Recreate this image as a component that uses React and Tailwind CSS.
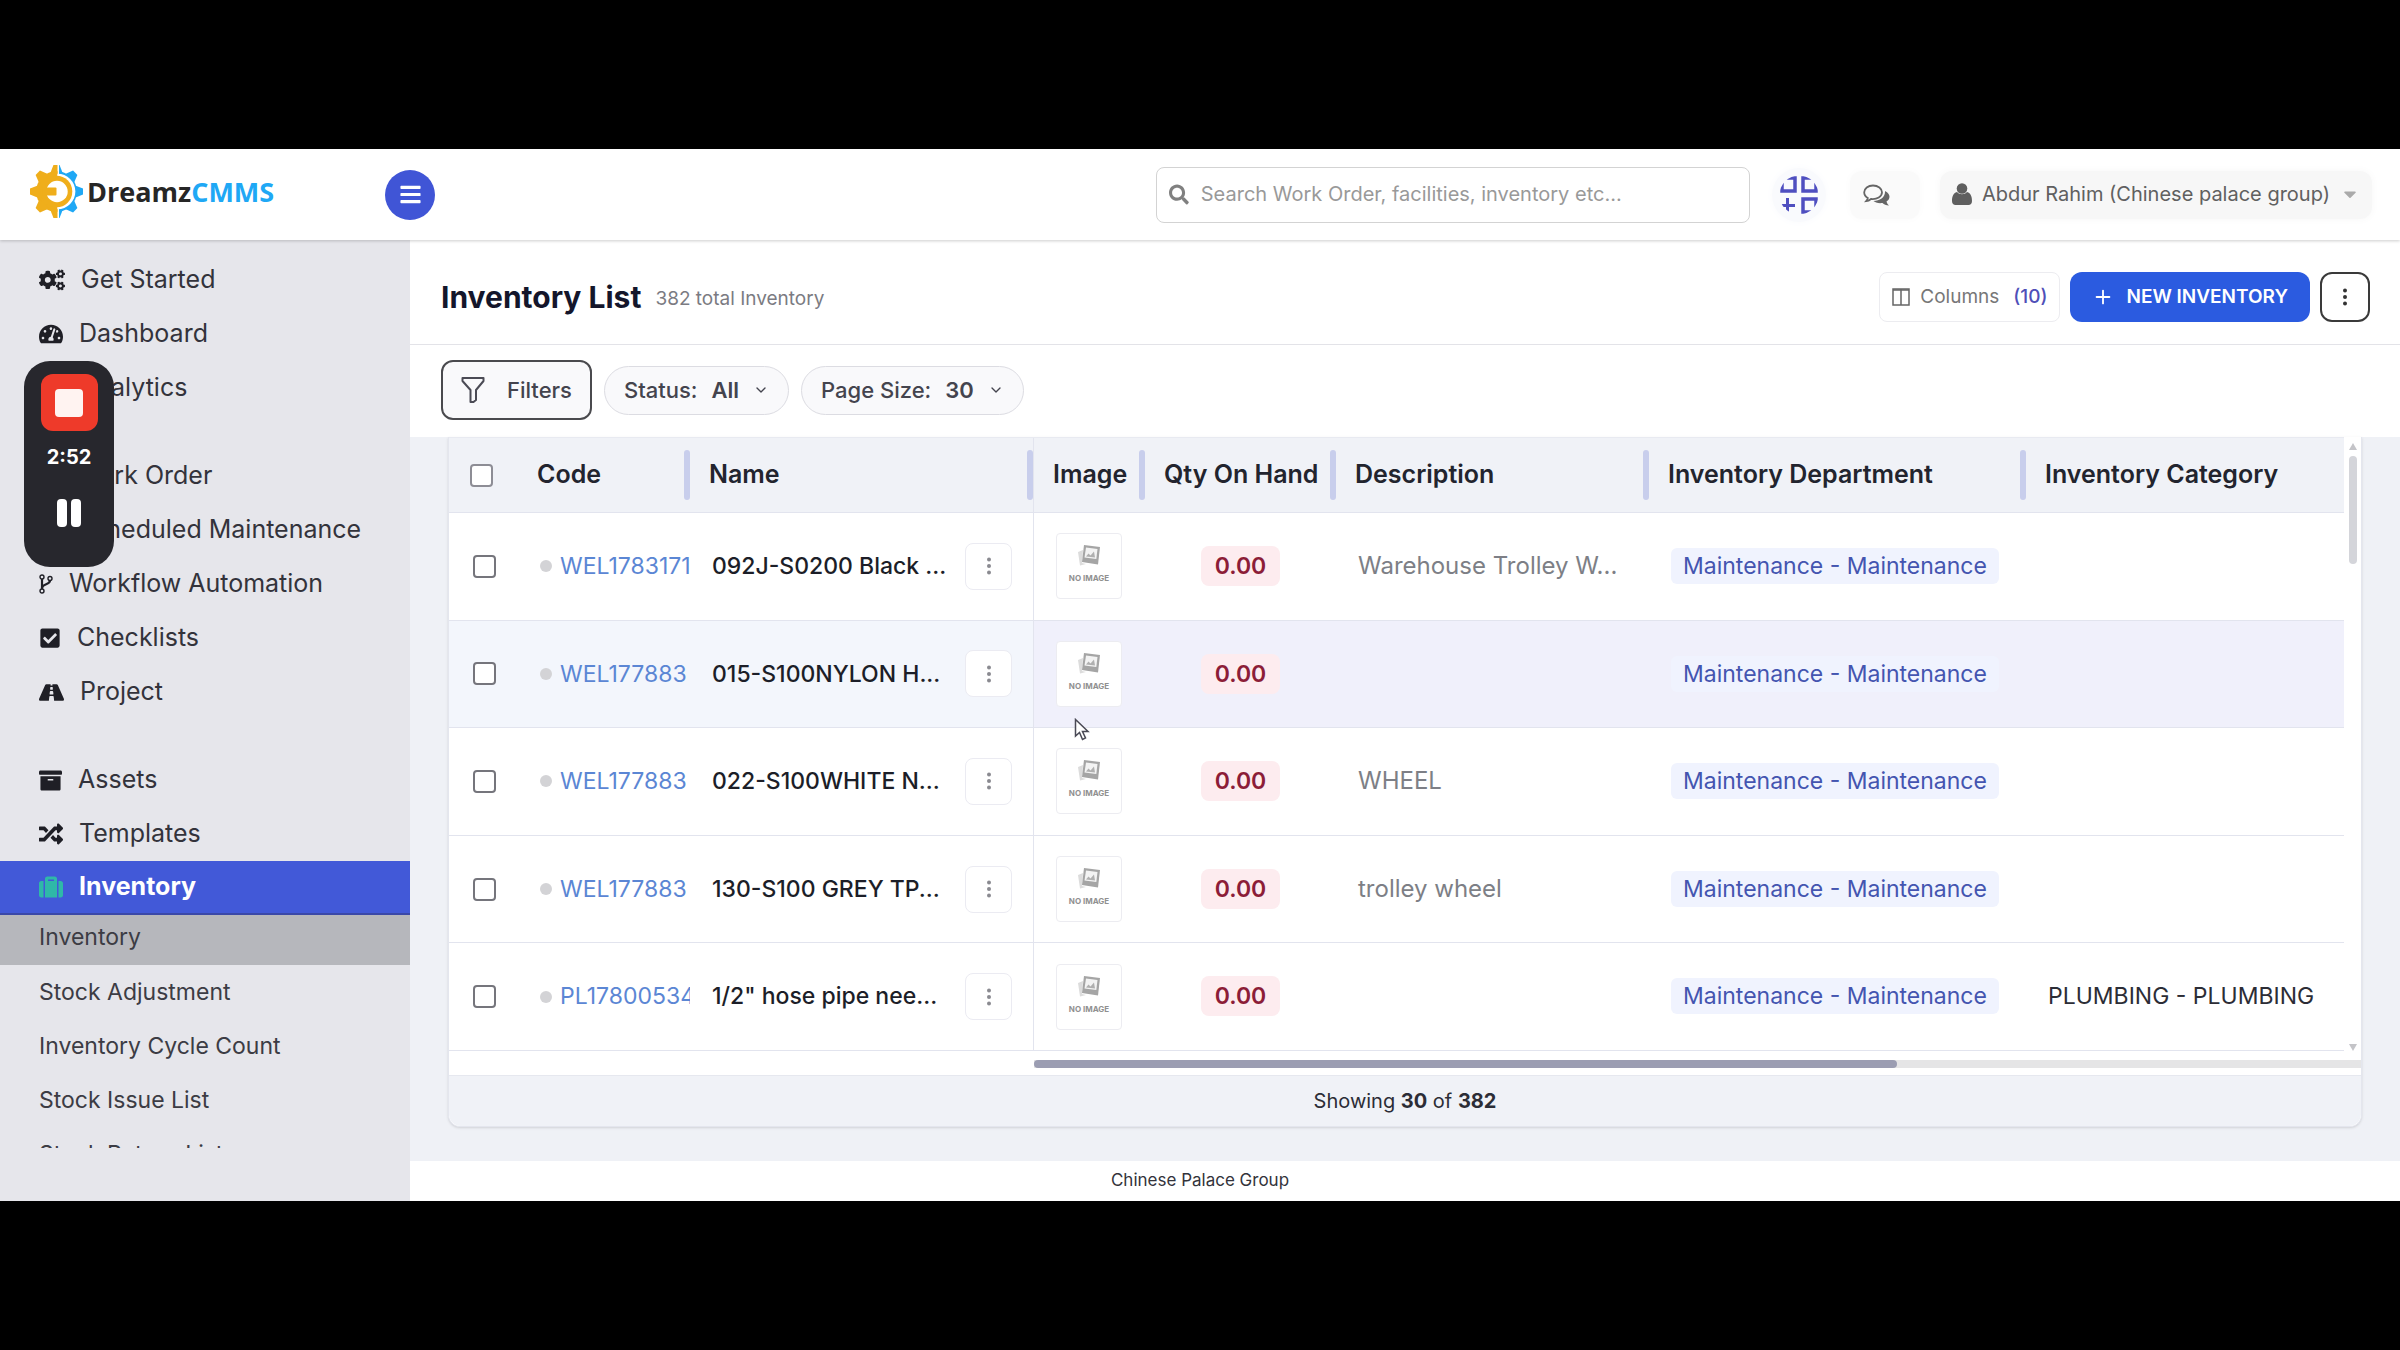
import {
  FaArchive, FaBars, FaCheckSquare, FaChartBar, FaCogs, FaCalendarAlt, FaCaretDown,
  FaRandom, FaRoad, FaSearch, FaSuitcase, FaTachometerAlt, FaWrench,
} from 'react-icons/fa'
import { ChevronDown, Plus } from 'lucide-react'

const NAV = [
  [
    { label: 'Get Started', icon: FaCogs, size: 26 },
    { label: 'Dashboard', icon: FaTachometerAlt, size: 24 },
    { label: 'Analytics', icon: FaChartBar, size: 24 },
  ],
  [
    { label: 'Work Order', icon: FaWrench, size: 21 },
    { label: 'Scheduled Maintenance', icon: FaCalendarAlt, size: 21 },
    { label: 'Workflow Automation', icon: BranchIcon, size: 20 },
    { label: 'Checklists', icon: FaCheckSquare, size: 22 },
    { label: 'Project', icon: FaRoad, size: 25 },
  ],
  [
    { label: 'Assets', icon: FaArchive, size: 23 },
    { label: 'Templates', icon: FaRandom, size: 24 },
    { label: 'Inventory', icon: FaSuitcase, size: 24, active: true },
  ],
]

const SUB_NAV = ['Inventory', 'Stock Adjustment', 'Inventory Cycle Count', 'Stock Issue List', 'Stock Return List']

const COLUMNS = ['Code', 'Name', 'Image', 'Qty On Hand', 'Description', 'Inventory Department', 'Inventory Category']

const ROWS = [
  { code: 'WEL1783171', name: '092J-S0200 Black ...', desc: 'Warehouse Trolley W...', category: '' },
  { code: 'WEL177883', name: '015-S100NYLON H...', desc: '', category: '', hover: true },
  { code: 'WEL177883', name: '022-S100WHITE N...', desc: 'WHEEL', category: '' },
  { code: 'WEL177883', name: '130-S100 GREY TP...', desc: 'trolley wheel', category: '' },
  { code: 'PL17800534', name: '1/2" hose pipe nee...', desc: '', category: 'PLUMBING - PLUMBING' },
]

function BranchIcon({ size, className }) {
  return (
    <svg width={size * 0.7} height={size} viewBox="0 0 14 20" fill="none" stroke="currentColor" strokeWidth="1.4" className={className}>
      <circle cx="3" cy="3" r="2" />
      <circle cx="3" cy="17" r="2" />
      <circle cx="11" cy="4.5" r="2" />
      <path d="M3 5 V15" strokeWidth="2.2" />
      <path d="M11 6.5 C11 11 3.5 9.5 3 14" strokeWidth="2.2" />
    </svg>
  )
}

function Logo() {
  const teeth = [0, 45, 90, 135, 180, 225, 270, 315]
  const gear = (
    <>
      <circle cx="26" cy="26" r="20" />
      {teeth.map(a => (
        <path key={a} d="M19.5 9 L23 0 H29 L32.5 9 Z" transform={`rotate(${a} 26 26)`} />
      ))}
    </>
  )
  return (
    <a href="#" className="flex items-center gap-1" aria-label="DreamzCMMS">
      <svg width="53" height="53" viewBox="0 0 52 52">
        <defs>
          <clipPath id="gear-left"><rect x="0" y="0" width="27" height="52" /></clipPath>
          <clipPath id="gear-right"><rect x="28.5" y="0" width="24" height="52" /></clipPath>
        </defs>
        <g clipPath="url(#gear-left)" fill="#efae1b">{gear}</g>
        <g clipPath="url(#gear-right)" fill="#1fa8f5">{gear}</g>
        <path d="M27 8.5 A17.5 17.5 0 0 1 27 43.5 Z" fill="#fff" />
        <circle cx="26" cy="26" r="15.5" fill="#efae1b" />
        <circle cx="26.5" cy="26" r="10.5" fill="#fff" />
        <rect x="12" y="22" width="14" height="8" rx="1" fill="#efae1b" />
      </svg>
      <span className="font-['Open_Sans',sans-serif] text-[27px] leading-8 font-bold text-[#262626]">
        Dreamz<span className="text-[#1fa8f5]">CMMS</span>
      </span>
    </a>
  )
}

function QuickIcon() {
  return (
    <svg width="38" height="38" viewBox="0 0 38 38" fill="none" stroke="#4f4fc0" strokeWidth="3.5">
      <defs>
        <clipPath id="quick-clip"><circle cx="19" cy="19" r="19.5" /></clipPath>
      </defs>
      <g clipPath="url(#quick-clip)">
        <path d="M2 2 H15 V15 H2 Z" />
        <path d="M23 2 H36 V15 H23 Z" />
        <path d="M23 23 H36 V36 H23 Z" />
        <path d="M0 29.5 H15 M7.5 22 V37" strokeWidth="3" />
      </g>
    </svg>
  )
}

function ChatIcon() {
  return (
    <svg width="27" height="22" viewBox="0 0 27 22">
      <path d="M22 7 C28 10 27.5 15 23.5 17.5 C24 19.5 25 20.5 26 21.5 C23 21.5 21 20.5 19.5 19 C15.5 19.6 12 18.5 10.5 17 C17 17 22.5 13 22 7 Z" fill="#666" />
      <path d="M10 1.5 C5 1.5 1.2 4.5 1.2 8.3 C1.2 10.8 2.7 12.8 4.8 14 C4.5 15.5 4 16.3 3.2 17.2 C5.2 17 6.8 16 8 15 C14 15.7 19 12.6 19 8.3 C19 4.5 15 1.5 10 1.5 Z" fill="#fafafa" stroke="#666" strokeWidth="1.8" />
    </svg>
  )
}

function UserIcon() {
  return (
    <svg width="20" height="22" viewBox="0 0 20 22" fill="#5f5f5f">
      <circle cx="10" cy="5.5" r="5.3" />
      <path d="M5 9 C7.5 12 12.5 12 15 9 C19 10 20 14 20 18 C20 20.5 18.5 22 16.5 22 H3.5 C1.5 22 0 20.5 0 18 C0 14 1 10 5 9 Z" />
    </svg>
  )
}

function FilterIcon() {
  return (
    <svg width="24" height="28" viewBox="0 0 24 28" fill="none" stroke="#4b4b55" strokeWidth="2" strokeLinejoin="round">
      <path d="M1.5 2 H22.5 V5 L15 14 V24 L12.5 26 H9.5 V14 L1.5 5 Z" />
    </svg>
  )
}

function ColumnsIcon() {
  return (
    <svg width="18" height="20" viewBox="0 0 18 20" fill="none" stroke="#666" strokeWidth="1.5">
      <rect x="1" y="2" width="16" height="16" />
      <path d="M1 3 H17 M9 2 V18" />
    </svg>
  )
}

function Dots() {
  return (
    <svg width="6" height="20" viewBox="0 0 6 20" fill="currentColor">
      <circle cx="3" cy="3.5" r="2" />
      <circle cx="3" cy="10" r="2" />
      <circle cx="3" cy="16.5" r="2" />
    </svg>
  )
}

function NoImage() {
  return (
    <div className="flex size-[66px] flex-col items-center rounded border border-[#ececf1] bg-white pt-2.5">
      <svg width="24" height="22" viewBox="0 0 24 22">
        <path d="M1 8 L6 6 L5 19 L9 20 L3 21.5 Z" fill="#dcdcdc" />
        <path d="M7 1 L23 3 L21 20.5 L5 18 Z" fill="#a5a5a5" />
        <path d="M9 3.5 L20.5 5 L19.3 15 L7.5 13.5 Z" fill="#f3f3f3" />
        <path d="M9 12.5 L11.5 9.5 L13.5 11.5 L17 7.5 L18 13.5 Z" fill="#b0b0b0" />
      </svg>
      <span className="mt-1.5 text-[8px] leading-3 font-bold text-[#909090]">NO IMAGE</span>
    </div>
  )
}

function Header() {
  return (
    <header className="relative z-10 flex h-[91px] items-center bg-white pr-7 pl-[30px] shadow-[0_1px_3px_rgba(0,0,0,0.2)]">
      <div className="flex w-[355px] pb-1.5">
        <Logo />
      </div>
      <button type="button" aria-label="Toggle menu" className="flex size-[50px] items-center justify-center rounded-full bg-[#4055d6] text-white">
        <FaBars size={23} />
      </button>
      <label className="ml-auto flex h-14 w-[594px] items-center gap-3 rounded-lg border border-[#d3d3d3] px-3 text-[#808080]">
        <FaSearch size={21} />
        <input
          type="text"
          aria-label="Search"
          placeholder="Search Work Order, facilities, inventory etc..."
          className="w-full bg-transparent pb-0.5 text-xl outline-none placeholder:text-[#999]"
        />
      </label>
      <button type="button" aria-label="Quick add" className="ml-[22px] flex size-[54px] items-center justify-center rounded-full bg-[#f9fafd] shadow-[0_0_8px_#f9fafd]">
        <QuickIcon />
      </button>
      <button type="button" aria-label="Messages" className="ml-6 flex h-12 w-[70px] items-center justify-center rounded-xl bg-[#fafafa] pr-4 shadow-[0_0_8px_#fafafa]">
        <ChatIcon />
      </button>
      <button type="button" className="ml-5 flex h-12 items-center gap-2.5 rounded-xl bg-[#f7f7f7] px-3 pb-0.5 text-xl text-[#606060] shadow-[0_0_8px_#f7f7f7]">
        <UserIcon />
        Abdur Rahim (Chinese palace group)
        <FaCaretDown size={20} className="text-[#aaa]" />
      </button>
    </header>
  )
}

function Sidebar() {
  return (
    <nav className="w-[410px] flex-shrink-0 bg-[#e6e6eb] pt-[13px]">
      <div className="h-[895px] overflow-hidden">
        {NAV.map((group, i) => (
          <div key={i} className={i > 0 ? 'mt-[34px]' : ''}>
            {group.map(({ label, icon: Icon, size, active }) => (
              <a
                key={label}
                href="#"
                className={
                  active
                    ? 'flex h-[54px] items-center gap-4 border-b-2 border-[#3a48a8] bg-[#4259d8] pl-[39px] text-[25px] font-bold text-white'
                    : 'flex h-[54px] items-center gap-4 pl-[39px] text-[25px] text-[#33333b]'
                }
              >
                <Icon size={size} className={active ? 'text-[#2fb8a8]' : 'text-[#1f1f26]'} />
                {label}
              </a>
            ))}
          </div>
        ))}
        {SUB_NAV.map((label, i) => (
          <a
            key={label}
            href="#"
            className={
              i === 0
                ? 'flex h-[50px] items-center bg-[#b6b7bc] pb-1.5 pl-[39px] text-[23px] text-[#3c3c44]'
                : 'flex h-[54px] items-center pl-[39px] text-[23px] text-[#3c3c44]'
            }
          >
            {label}
          </a>
        ))}
      </div>
    </nav>
  )
}

function TitleBar() {
  return (
    <div className="flex h-[105px] items-center border-b border-[#e3e3e8] bg-white pt-2.5 pr-[30px] pl-[31px]">
      <h1 className="text-[30px] font-bold text-[#14162b]">Inventory List</h1>
      <span className="mt-1 ml-3.5 text-[19px] text-[#7b7b82]">382 total Inventory</span>
      <div className="ml-auto flex items-center gap-2.5">
        <button type="button" className="flex h-[50px] items-center gap-2.5 rounded-lg border border-[#ececf0] px-3 text-[19px] text-[#777]">
          <ColumnsIcon />
          Columns
          <span className="ml-1 font-medium text-[#4f4fb8]">(10)</span>
        </button>
        <button type="button" className="flex h-[50px] items-center gap-3 rounded-xl bg-[#2b5be0] px-[22px] text-[19px] font-semibold text-white">
          <Plus size={22} />
          NEW INVENTORY
        </button>
        <button type="button" aria-label="More" className="flex size-[50px] items-center justify-center rounded-xl border-2 border-[#3a3a3a] text-[#333]">
          <Dots />
        </button>
      </div>
    </div>
  )
}

function FilterBar() {
  return (
    <div className="flex h-[92px] items-center gap-3 bg-white pb-0.5 pl-[31px]">
      <button type="button" className="flex h-[60px] items-center gap-[22px] rounded-xl border-2 border-[#4a4a4e] bg-[#f9f9fb] px-[18px] text-[22px] font-medium text-[#44444e]">
        <FilterIcon />
        Filters
      </button>
      <button type="button" className="flex h-[49px] items-center gap-3.5 rounded-full border border-[#dcdce2] bg-[#f9f9fb] px-[19px] text-[22px] font-medium text-[#44444e]">
        Status: <span className="font-semibold">All</span>
        <ChevronDown size={16} />
      </button>
      <button type="button" className="flex h-[49px] items-center gap-3.5 rounded-full border border-[#dcdce2] bg-[#f9f9fb] px-[19px] text-[22px] font-medium text-[#44444e]">
        Page Size: <span className="font-semibold">30</span>
        <ChevronDown size={16} />
      </button>
    </div>
  )
}

function InventoryTable() {
  return (
    <table className="h-[613px] w-full table-fixed border-separate border-spacing-0 text-left">
      <colgroup>
        <col className="w-[69px]" />
        <col className="w-[172px]" />
        <col className="w-[344px]" />
        <col className="w-[111px]" />
        <col className="w-[191px]" />
        <col className="w-[313px]" />
        <col className="w-[377px]" />
        <col />
      </colgroup>
      <thead>
        <tr className="bg-[#f0f2f7]">
          <th className="h-[75px] border-b border-[#e2e4ee] pl-[21px]">
            <input type="checkbox" aria-label="Select all" className="block size-[23px] appearance-none rounded border-2 border-[#8d8d95] bg-white" />
          </th>
          {COLUMNS.map((c, i) => (
            <th key={c} className={i === 1 ? 'border-r border-b border-[#e2e4ee]' : 'border-b border-[#e2e4ee]'}>
              <div className="flex h-[50px] items-center justify-between pl-[19px] text-[25px] font-semibold whitespace-nowrap text-[#22242e]">
                {c}
                {i < COLUMNS.length - 1 && <span className="h-[50px] w-1.5 flex-shrink-0 rounded-full bg-[#c8ceec]" />}
              </div>
            </th>
          ))}
        </tr>
      </thead>
      <tbody>
        {ROWS.map((r, i) => (
          <tr key={i} className={r.hover ? 'bg-[#f0f0fb]' : 'bg-white'}>
            <td className={r.hover ? 'border-b border-[#e2e4ee] bg-[#f3f6fc] pl-6' : 'border-b border-[#e2e4ee] pl-6'}>
              <input type="checkbox" aria-label={`Select ${r.name}`} className="block size-[23px] appearance-none rounded border-2 border-[#75757c] bg-white" />
            </td>
            <td className={r.hover ? 'border-b border-[#e2e4ee] bg-[#f3f6fc] pl-[22px]' : 'border-b border-[#e2e4ee] pl-[22px]'}>
              <div className="flex items-center gap-2 overflow-hidden text-[23px] whitespace-nowrap">
                <span className="size-3 flex-shrink-0 rounded-full bg-[#d3d3d6]" />
                <a href="#" className="text-[#5b86d4]">{r.code}</a>
              </div>
            </td>
            <td className={r.hover ? 'border-r border-b border-[#e2e4ee] bg-[#f3f6fc] pr-[21px] pl-[22px]' : 'border-r border-b border-[#e2e4ee] pr-[21px] pl-[22px]'}>
              <div className="flex items-center justify-between text-[23px] font-medium whitespace-nowrap text-[#1c1e28]">
                {r.name}
                <button type="button" aria-label="Row actions" className="flex size-[47px] items-center justify-center rounded-lg border border-[#ebebf2] bg-white text-[#8a8a90]">
                  <Dots />
                </button>
              </div>
            </td>
            <td className="border-b border-[#e2e4ee] pl-[22px]">
              <NoImage />
            </td>
            <td className="border-b border-[#e2e4ee] text-center">
              <span className="rounded-lg bg-[#fdecef] px-3.5 py-1.5 text-[23px] font-semibold text-[#8c1d38]">0.00</span>
            </td>
            <td className="border-b border-[#e2e4ee] pl-[22px] text-2xl whitespace-nowrap text-[#7d7f86]">{r.desc}</td>
            <td className="border-b border-[#e2e4ee] pl-[22px] whitespace-nowrap">
              <span className="rounded-md bg-[#f0f3fe] px-3 py-1 text-[23px] text-[#4455b0]">Maintenance - Maintenance</span>
            </td>
            <td className="border-b border-[#e2e4ee] pl-[22px] text-[23px] whitespace-nowrap text-[#2c2d36]">{r.category}</td>
          </tr>
        ))}
      </tbody>
    </table>
  )
}

function TableCard() {
  return (
    <div className="mr-[38px] ml-[38px] rounded-b-xl border border-t-0 border-[#e4e6ee] bg-white shadow-sm">
      <div className="flex">
        <div className="min-w-0 flex-1 border-t border-[#e8eaf1]">
          <InventoryTable />
        </div>
        <div className="flex w-[17px] flex-col items-center pt-1.5 text-[#c4c4c8]">
          <svg width="8" height="7" viewBox="0 0 8 7" fill="currentColor"><path d="M4 0 L8 7 H0 Z" /></svg>
          <div className="mt-1.5 h-[108px] w-2 rounded-full bg-[#d4d5da]" />
          <svg width="8" height="7" viewBox="0 0 8 7" fill="currentColor" className="mt-auto"><path d="M4 7 L8 0 H0 Z" /></svg>
        </div>
      </div>
      <div className="flex h-6 items-center pt-0.5 pl-[585px]">
        <div className="h-2 w-full bg-[#e5e5e6]">
          <div className="h-2 w-[65%] rounded-full bg-[#9b9db2]" />
        </div>
      </div>
      <div className="flex h-[51px] items-center justify-center rounded-b-xl border-t border-[#e6e8ef] bg-[#f0f2f7] text-xl text-[#2c2d36]">
        <p>Showing <b>30</b> of <b>382</b></p>
      </div>
    </div>
  )
}

function Recorder() {
  return (
    <div className="absolute top-[361px] left-6 z-20 flex h-[206px] w-[90px] flex-col items-center rounded-[26px] bg-[#27272d] pt-[13px]">
      <button type="button" aria-label="Stop recording" className="flex size-[57px] items-center justify-center rounded-xl bg-[#ee3a2a]">
        <span className="size-7 rounded bg-[#fff3f1]" />
      </button>
      <span className="mt-3.5 text-xl leading-6 font-bold text-white">2:52</span>
      <button type="button" aria-label="Pause recording" className="mt-[30px] flex gap-1">
        <span className="h-7 w-2.5 rounded bg-white" />
        <span className="h-7 w-2.5 rounded bg-white" />
      </button>
    </div>
  )
}

export default function App() {
  return (
    <div className="relative min-h-screen bg-black py-[149px] font-['Inter',sans-serif]">
      <Header />
      <div className="flex">
        <Sidebar />
        <main className="flex min-w-0 flex-1 flex-col bg-[#eff1f6]">
          <TitleBar />
          <FilterBar />
          <TableCard />
          <footer className="mt-[34px] flex h-10 items-center justify-center bg-white pr-[410px] text-[17px] text-[#33333b]">
            Chinese Palace Group
          </footer>
        </main>
      </div>
      <Recorder />
      <svg width="16" height="24" viewBox="0 0 16 24" className="absolute top-[718px] left-[1074px] z-20">
        <path d="M1.5 1.5 V18 L5.5 14.5 L8.5 21.5 L11.5 20 L8.5 13.5 H14 Z" fill="#fff" stroke="#4a4a55" strokeWidth="1.5" />
      </svg>
    </div>
  )
}
